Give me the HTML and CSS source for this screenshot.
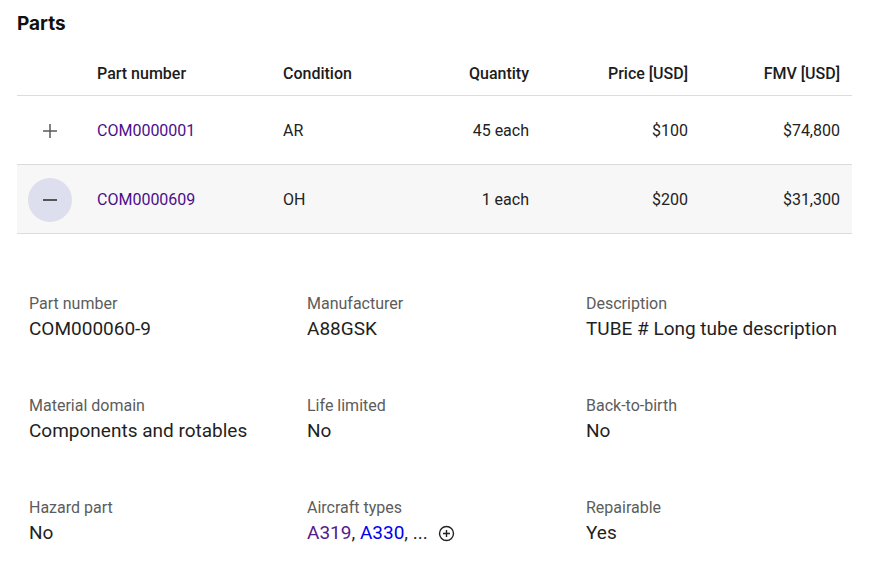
FILE: index.html
```html
<!DOCTYPE html>
<html>
<head>
<meta charset="utf-8">
<link rel="stylesheet" href="styles.css">
</head>
<body>
<div class="page">
  <h2 class="title">Parts</h2>
  <div class="table">
    <div class="row head">
      <div class="cell"></div>
      <div class="cell">Part number</div>
      <div class="cell">Condition</div>
      <div class="cell num">Quantity</div>
      <div class="cell num">Price [USD]</div>
      <div class="cell num">FMV [USD]</div>
    </div>
    <div class="row">
      <div class="cell"><span class="toggle"><svg width="18" height="18" viewBox="0 0 18 18"><path d="M9 2v14M2 9h14" stroke="#5a5a5a" stroke-width="1.5" fill="none"/></svg></span></div>
      <div class="cell"><a class="plink" href="#">COM0000001</a></div>
      <div class="cell">AR</div>
      <div class="cell num">45 each</div>
      <div class="cell num">$100</div>
      <div class="cell num">$74,800</div>
    </div>
    <div class="row open">
      <div class="cell"><span class="toggle active"><svg width="18" height="18" viewBox="0 0 18 18"><path d="M2 9h14" stroke="#555" stroke-width="2" fill="none"/></svg></span></div>
      <div class="cell"><a class="plink" href="#">COM0000609</a></div>
      <div class="cell">OH</div>
      <div class="cell num">1 each</div>
      <div class="cell num">$200</div>
      <div class="cell num">$31,300</div>
    </div>
  </div>
  <div class="details">
    <div class="item"><div class="label">Part number</div><div class="value">COM000060-9</div></div>
    <div class="item"><div class="label">Manufacturer</div><div class="value">A88GSK</div></div>
    <div class="item"><div class="label">Description</div><div class="value">TUBE # Long tube description</div></div>
    <div class="item"><div class="label">Material domain</div><div class="value">Components and rotables</div></div>
    <div class="item"><div class="label">Life limited</div><div class="value">No</div></div>
    <div class="item"><div class="label">Back-to-birth</div><div class="value">No</div></div>
    <div class="item"><div class="label">Hazard part</div><div class="value">No</div></div>
    <div class="item"><div class="label">Aircraft types</div><div class="value"><a class="visited" href="#">A319</a>, <a class="fresh" href="#">A330</a>, ... <svg class="more" width="17" height="17" viewBox="0 0 17 17"><circle cx="8.5" cy="8.5" r="7" stroke="#222" stroke-width="1.4" fill="none"/><path d="M8.5 5v7M5 8.5h7" stroke="#222" stroke-width="1.4"/></svg></div></div>
    <div class="item"><div class="label">Repairable</div><div class="value">Yes</div></div>
  </div>
</div>
</body>
</html>
```

FILE: styles.css
```css
html, body {
  margin: 0;
  padding: 0;
  background: #fff;
}
.page {
  padding: 0 32px 0 17px;
  font-family: Roboto, "Liberation Sans", sans-serif;
  color: #222;
}
.title {
  margin: 0;
  padding-top: 12px;
  font-family: Inter, "Liberation Sans", sans-serif;
  font-weight: 700;
  font-size: 19px;
  line-height: 24px;
  color: #111;
}
.table {
  margin-top: 25px;
  width: 835px;
}
.row {
  display: grid;
  grid-template-columns: 68px 186px 150px 120px 159px 1fr;
  align-items: center;
  height: 67px;
  padding-top: 1px;
  border-bottom: 1px solid #dcdcdc;
  font-size: 16px;
}
.row.head {
  height: 31px;
  padding-top: 3px;
  align-items: start;
  font-weight: 500;
  color: #1c1c1c;
}
.row.open {
  background: #f7f7f7;
}
.cell {
  padding: 0 12px;
  line-height: 20px;
}
.cell:first-child {
  padding: 0;
}
.cell.num {
  text-align: right;
}
.toggle {
  display: flex;
  align-items: center;
  justify-content: center;
  width: 44px;
  height: 44px;
  margin-left: 11px;
  border-radius: 50%;
}
.toggle.active {
  background: #dedfee;
}
.plink {
  color: #4b0f8c;
  text-decoration: none;
}
.details {
  display: grid;
  grid-template-columns: 278px 279px 1fr;
  row-gap: 55px;
  padding: 60px 0 0 12px;
}
.label {
  font-size: 16px;
  line-height: 20px;
  color: #5c5c5c;
}
.value {
  margin-top: 3px;
  font-size: 19px;
  line-height: 24px;
  color: #1f1f1f;
  display: flex;
  align-items: center;
  white-space: pre;
}
.visited {
  color: #551a8b;
  text-decoration: none;
}
.fresh {
  color: #0000ee;
  text-decoration: none;
}
.more {
  margin-left: 5px;
}
```
